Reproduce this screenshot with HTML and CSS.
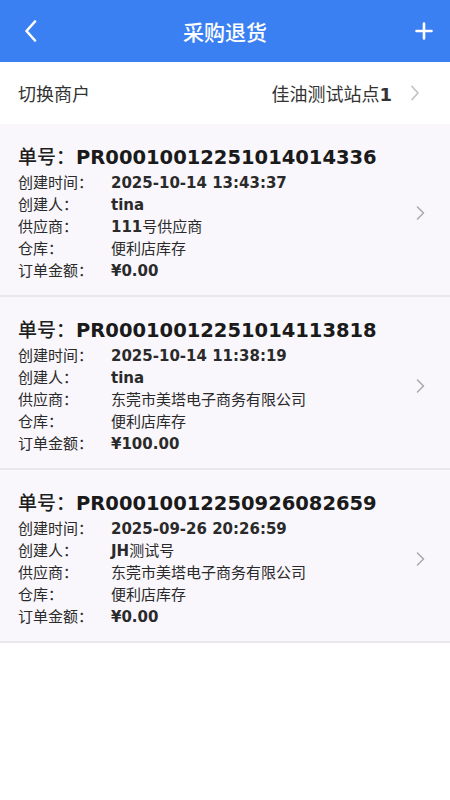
FILE: index.html
```html
<!DOCTYPE html>
<html lang="zh">
<head>
<meta charset="utf-8">
<title>采购退货</title>
<link rel="stylesheet" href="styles.css">
</head>
<body>
<header class="nav">
  <span class="nav-btn nav-left">
    <svg width="14" height="22" viewBox="0 0 14 22"><path d="M11 1.5 L2.5 11 L11 20.5" fill="none" stroke="#fff" stroke-width="2.6" stroke-linecap="round" stroke-linejoin="round"/></svg>
  </span>
  <h1 class="nav-title">采购退货</h1>
  <span class="nav-btn nav-right">
    <svg width="18" height="18" viewBox="0 0 18 18"><path d="M9 1.5 V16.5 M1.5 9 H16.5" stroke="#fff" stroke-width="2.6" stroke-linecap="round"/></svg>
  </span>
</header>

<div class="merchant">
  <span class="merchant-label">切换商户</span>
  <span class="merchant-value">佳油测试站点<b class="lat">1</b></span>
  <svg class="merchant-arrow" width="10" height="16" viewBox="0 0 10 16"><path d="M2 1.5 L8 8 L2 14.5" fill="none" stroke="#c4c4c4" stroke-width="1.8" stroke-linecap="round" stroke-linejoin="round"/></svg>
</div>

<main class="list">
  <section class="card">
    <div class="card-body">
      <div class="card-title">单号：<b class="lat">PR00010012251014014336</b></div>
      <dl class="rows">
        <dt>创建时间：</dt><dd><b class="lat">2025-10-14 13:43:37</b></dd>
        <dt>创建人：</dt><dd><b class="lat">tina</b></dd>
        <dt>供应商：</dt><dd><b class="lat">111</b>号供应商</dd>
        <dt>仓库：</dt><dd>便利店库存</dd>
        <dt>订单金额：</dt><dd><b class="lat">¥0.00</b></dd>
      </dl>
    </div>
    <svg class="card-arrow" width="9" height="14" viewBox="0 0 9 14"><path d="M1.5 1 L7.5 7 L1.5 13" fill="none" stroke="#a8a8ac" stroke-width="1.5" stroke-linecap="round" stroke-linejoin="round"/></svg>
  </section>

  <section class="card">
    <div class="card-body">
      <div class="card-title">单号：<b class="lat">PR00010012251014113818</b></div>
      <dl class="rows">
        <dt>创建时间：</dt><dd><b class="lat">2025-10-14 11:38:19</b></dd>
        <dt>创建人：</dt><dd><b class="lat">tina</b></dd>
        <dt>供应商：</dt><dd>东莞市美塔电子商务有限公司</dd>
        <dt>仓库：</dt><dd>便利店库存</dd>
        <dt>订单金额：</dt><dd><b class="lat">¥100.00</b></dd>
      </dl>
    </div>
    <svg class="card-arrow" width="9" height="14" viewBox="0 0 9 14"><path d="M1.5 1 L7.5 7 L1.5 13" fill="none" stroke="#a8a8ac" stroke-width="1.5" stroke-linecap="round" stroke-linejoin="round"/></svg>
  </section>

  <section class="card">
    <div class="card-body">
      <div class="card-title">单号：<b class="lat">PR00010012250926082659</b></div>
      <dl class="rows">
        <dt>创建时间：</dt><dd><b class="lat">2025-09-26 20:26:59</b></dd>
        <dt>创建人：</dt><dd><b class="lat">JH</b>测试号</dd>
        <dt>供应商：</dt><dd>东莞市美塔电子商务有限公司</dd>
        <dt>仓库：</dt><dd>便利店库存</dd>
        <dt>订单金额：</dt><dd><b class="lat">¥0.00</b></dd>
      </dl>
    </div>
    <svg class="card-arrow" width="9" height="14" viewBox="0 0 9 14"><path d="M1.5 1 L7.5 7 L1.5 13" fill="none" stroke="#a8a8ac" stroke-width="1.5" stroke-linecap="round" stroke-linejoin="round"/></svg>
  </section>
</main>
</body>
</html>
```

FILE: styles.css
```css
* { box-sizing: border-box; }
html, body { margin: 0; padding: 0; }
body {
  background: #ffffff;
  font-family: "Noto Sans CJK SC", "Noto Sans", sans-serif;
  color: #222;
  width: 450px;
}
.lat {
  font-family: "DejaVu Sans", "Noto Sans CJK SC", sans-serif;
  font-weight: 700;
}
.nav {
  height: 62px;
  background: #3b80f2;
  display: grid;
  grid-template-columns: 70px 1fr 70px;
  align-items: center;
}
.nav-btn { display: flex; }
.nav-left { padding-left: 24px; }
.nav-right { justify-content: flex-end; padding-right: 17px; }
.nav-title {
  margin: 0;
  text-align: center;
  color: #fff;
  font-size: 21px;
  font-weight: 500;
}
.merchant {
  height: 62px;
  background: #fff;
  display: flex;
  align-items: center;
  padding: 0 30px 0 18px;
  font-size: 18px;
  color: #333;
}
.merchant-label { flex: 1; }
.merchant-value { margin-right: 18px; color: #333; }
.merchant-value .lat { font-size: 18px; }
.list { background: #fff; }
.card {
  background: #f9f7fc;
  border-bottom: 2px solid #e9e7ed;
  display: flex;
  align-items: center;
  padding: 20px 27px 14px 18px;
}
.card-body { flex: 1; }
.card-title {
  height: 24px;
  line-height: 24px;
  font-size: 19px;
  color: #1e1e1e;
  font-weight: 500;
  white-space: nowrap;
}
.card-title .lat { font-size: 19.5px; font-weight: 700; color: #1a1a1a; margin-left: 1px; line-height: 24px; }
.rows {
  margin: 3px 0 0;
  display: grid;
  grid-template-columns: 93px 1fr;
  font-size: 15px;
  color: #2a2a2a;
}
.rows dt, .rows dd {
  margin: 0;
  height: 22px;
  line-height: 22px;
  white-space: nowrap;
}
.rows dd .lat { font-size: 15px; line-height: 22px; }
.card-arrow { flex: none; margin-right: -2px; }
```
